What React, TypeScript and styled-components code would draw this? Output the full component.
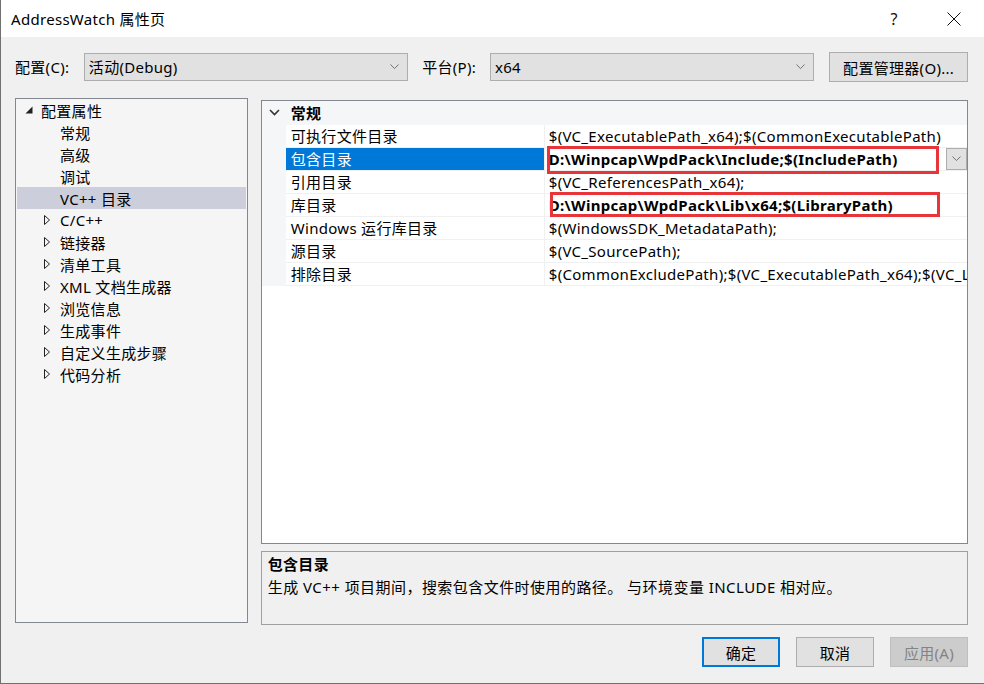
import React from "react";
import styled, { createGlobalStyle } from "styled-components";

const FONT = `"Noto Sans", "Noto Sans CJK SC", sans-serif`;

const GlobalStyle = createGlobalStyle`
  html, body { margin: 0; padding: 0; background: #f0f0f0; }
  body { font-family: ${FONT}; font-size: 15px; color: #000; letter-spacing: 0.3px; }
  * { box-sizing: border-box; }
`;

const Window = styled.div`
  width: 984px;
  height: 684px;
  display: flex;
  flex-direction: column;
  border-left: 1px solid #707070;
  border-bottom: 1px solid #707070;
  background: #f0f0f0;
  overflow: hidden;
`;

const TitleBar = styled.div`
  height: 37px;
  flex: none;
  background: #fff;
  display: flex;
  align-items: center;
  padding-left: 10px;
`;

const TitleText = styled.div`
  flex: 1;
  font-size: 15px;
  line-height: 20px;
`;

const CaptionButton = styled.div`
  width: 60px;
  height: 37px;
  display: flex;
  align-items: center;
  justify-content: center;
  font-size: 16px;
  color: #111;
`;

const Body = styled.div`
  flex: 1;
  display: flex;
  flex-direction: column;
  padding: 15px 16px 0 14px;
`;

const TopRow = styled.div`
  display: flex;
  align-items: center;
  height: 30px;
`;

const Label = styled.div<{ $w: number; $ml?: number }>`
  width: ${(p) => p.$w}px;
  margin-left: ${(p) => p.$ml ?? 0}px;
  line-height: 20px;
  white-space: nowrap;
`;

const Select = styled.div`
  width: 325px;
  height: 28px;
  background: #e1e1e1;
  border: 1px solid #adadad;
  display: flex;
  align-items: center;
  padding: 0 8px 0 4px;
`;

const SelectText = styled.div`
  flex: 1;
  line-height: 20px;
`;

const PushButton = styled.div<{ $w: number; $ml?: number; $default?: boolean; $disabled?: boolean }>`
  width: ${(p) => p.$w}px;
  height: 30px;
  margin-left: ${(p) => p.$ml ?? 0}px;
  display: flex;
  align-items: center;
  justify-content: center;
  background: ${(p) => (p.$disabled ? "#cccccc" : "#e1e1e1")};
  border: ${(p) => (p.$default ? "2px solid #0078d7" : p.$disabled ? "1px solid #bfbfbf" : "1px solid #adadad")};
  color: ${(p) => (p.$disabled ? "#838383" : "#000")};
  white-space: nowrap;
`;

const Main = styled.div`
  display: flex;
  margin-top: 16px;
  gap: 13px;
`;

const Tree = styled.div`
  width: 233px;
  height: 525px;
  border: 1px solid #828790;
  background: #f5f5f5;
  padding: 0 0 0 1px;
`;

const TreeRow = styled.div<{ $level: number; $selected?: boolean }>`
  height: 22px;
  display: flex;
  align-items: center;
  padding-left: ${(p) => p.$level * 19}px;
  background: ${(p) => (p.$selected ? "#cccedb" : "transparent")};
  margin-right: 1px;
  white-space: nowrap;
`;

const Expander = styled.div`
  width: 24px;
  height: 22px;
  flex: none;
  display: flex;
  align-items: center;
  padding-left: 8px;
`;

const RightColumn = styled.div`
  width: 708px;
  display: flex;
  flex-direction: column;
  padding-top: 2px;
`;

const Grid = styled.div`
  height: 444px;
  border: 1px solid #828790;
  background: #f5f6f8;
  display: flex;
  flex-direction: column;
`;

const CategoryRow = styled.div`
  height: 24px;
  display: flex;
  align-items: center;
  padding-bottom: 1px;
  font-weight: 700;
`;

const CatChevron = styled.div`
  width: 29px;
  padding-left: 7px;
  display: flex;
  align-items: center;
`;

const PropRow = styled.div`
  height: 23px;
  display: grid;
  grid-template-columns: 24px 259px 1fr;
  position: relative;
`;

const Gutter = styled.div`
  background: #f5f6f8;
`;

const NameCell = styled.div<{ $selected?: boolean }>`
  background: ${(p) => (p.$selected ? "#0078d7" : "#fff")};
  color: ${(p) => (p.$selected ? "#fff" : "#000")};
  border-bottom: 1px solid #f0f0f0;
  border-right: 1px solid #f0f0f0;
  padding-left: 5px;
  line-height: 22px;
  white-space: nowrap;
  overflow: hidden;
`;

const ValueCell = styled.div`
  background: #fff;
  border-bottom: 1px solid #f0f0f0;
  display: flex;
  position: relative;
  min-width: 0;
`;

const ValueText = styled.div<{ $bold?: boolean }>`
  flex: 1;
  min-width: 0;
  padding-left: 4px;
  line-height: 22px;
  font-weight: ${(p) => (p.$bold ? 700 : 400)};
  white-space: nowrap;
  overflow: hidden;
`;

const DropButton = styled.div`
  width: 21px;
  height: 22px;
  flex: none;
  background: #e1e1e1;
  border: 1px solid #adadad;
  display: flex;
  align-items: center;
  justify-content: center;
`;

const RedBox = styled.div<{ $l: number; $t: number; $w: number; $h: number }>`
  position: absolute;
  left: ${(p) => p.$l}px;
  top: ${(p) => p.$t}px;
  width: ${(p) => p.$w}px;
  height: ${(p) => p.$h}px;
  border: 3px solid #e8353a;
  pointer-events: none;
  z-index: 2;
`;

const Empty = styled.div`
  flex: 1;
  background: #fff;
`;

const Desc = styled.div`
  margin-top: 7px;
  height: 74px;
  border: 1px solid #a0a0a0;
  background: #f0f0f0;
  padding: 1px 6px;
  line-height: 23px;
`;

const DescTitle = styled.div`
  font-weight: 700;
`;

const DescText = styled.div`
  letter-spacing: 0.45px;
`;

const Footer = styled.div`
  display: flex;
  justify-content: flex-end;
  margin-top: 12px;
  gap: 16px;
`;

const Chevron = ({ color = "#555", w = 10 }: { color?: string; w?: number }) => (
  <svg width={w} height={w / 2 + 1} viewBox="0 0 10 6">
    <polyline points="0.5,0.5 5,5 9.5,0.5" fill="none" stroke={color} strokeWidth="1" />
  </svg>
);

const Expanded = () => (
  <svg width="8" height="8" viewBox="0 0 8 8">
    <polygon points="7.5,0.5 7.5,7.5 0.5,7.5" fill="#222" />
  </svg>
);

const Collapsed = () => (
  <svg width="7" height="10" viewBox="0 0 7 10">
    <polygon points="0.5,0.5 5.5,5 0.5,9.5" fill="none" stroke="#222" strokeWidth="1" />
  </svg>
);

type TItem = { label: string; level: number; exp?: "open" | "closed"; selected?: boolean };
const treeItems: TItem[] = [
  { label: "配置属性", level: 0, exp: "open" },
  { label: "常规", level: 1 },
  { label: "高级", level: 1 },
  { label: "调试", level: 1 },
  { label: "VC++ 目录", level: 1, selected: true },
  { label: "C/C++", level: 1, exp: "closed" },
  { label: "链接器", level: 1, exp: "closed" },
  { label: "清单工具", level: 1, exp: "closed" },
  { label: "XML 文档生成器", level: 1, exp: "closed" },
  { label: "浏览信息", level: 1, exp: "closed" },
  { label: "生成事件", level: 1, exp: "closed" },
  { label: "自定义生成步骤", level: 1, exp: "closed" },
  { label: "代码分析", level: 1, exp: "closed" },
];

type PItem = {
  name: string;
  value: string;
  selected?: boolean;
  bold?: boolean;
  box?: { l: number; t: number; w: number; h: number };
  drop?: boolean;
};
const props: PItem[] = [
  { name: "可执行文件目录", value: "$(VC_ExecutablePath_x64);$(CommonExecutablePath)" },
  {
    name: "包含目录",
    value: "D:\\Winpcap\\WpdPack\\Include;$(IncludePath)",
    selected: true,
    bold: true,
    drop: true,
    box: { l: 2, t: -2, w: 392, h: 28 },
  },
  { name: "引用目录", value: "$(VC_ReferencesPath_x64);" },
  {
    name: "库目录",
    value: "D:\\Winpcap\\WpdPack\\Lib\\x64;$(LibraryPath)",
    bold: true,
    box: { l: 5, t: -2, w: 390, h: 25 },
  },
  { name: "Windows 运行库目录", value: "$(WindowsSDK_MetadataPath);" },
  { name: "源目录", value: "$(VC_SourcePath);" },
  { name: "排除目录", value: "$(CommonExcludePath);$(VC_ExecutablePath_x64);$(VC_LibraryPath_x64);" },
];

export default function App() {
  return (
    <>
      <GlobalStyle />
      <Window>
        <TitleBar>
          <TitleText>AddressWatch 属性页</TitleText>
          <CaptionButton>?</CaptionButton>
          <CaptionButton>
            <svg width="14" height="14" viewBox="0 0 14 14">
              <line x1="0.5" y1="0.5" x2="13.5" y2="13.5" stroke="#111" strokeWidth="1" />
              <line x1="13.5" y1="0.5" x2="0.5" y2="13.5" stroke="#111" strokeWidth="1" />
            </svg>
          </CaptionButton>
        </TitleBar>
        <Body>
          <TopRow>
            <Label $w={69}>配置(C):</Label>
            <Select>
              <SelectText>活动(Debug)</SelectText>
              <Chevron color="#666" w={9} />
            </Select>
            <Label $w={68} $ml={14}>平台(P):</Label>
            <Select>
              <SelectText>x64</SelectText>
              <Chevron color="#666" w={9} />
            </Select>
            <PushButton $w={139} $ml={15}>配置管理器(O)...</PushButton>
          </TopRow>
          <Main>
            <Tree>
              {treeItems.map((t) => (
                <TreeRow key={t.label} $level={t.level} $selected={t.selected}>
                  <Expander>
                    {t.exp === "open" && <Expanded />}
                    {t.exp === "closed" && <Collapsed />}
                  </Expander>
                  {t.label}
                </TreeRow>
              ))}
            </Tree>
            <RightColumn>
              <Grid>
                <CategoryRow>
                  <CatChevron>
                    <svg width="11" height="7" viewBox="0 0 11 7">
                      <polyline points="1,1 5.5,5.5 10,1" fill="none" stroke="#333" strokeWidth="1.6" />
                    </svg>
                  </CatChevron>
                  常规
                </CategoryRow>
                {props.map((p) => (
                  <PropRow key={p.name}>
                    <Gutter />
                    <NameCell $selected={p.selected}>{p.name}</NameCell>
                    <ValueCell>
                      <ValueText $bold={p.bold}>{p.value}</ValueText>
                      {p.drop && (
                        <DropButton>
                          <Chevron color="#666" w={9} />
                        </DropButton>
                      )}
                      {p.box && <RedBox $l={p.box.l} $t={p.box.t} $w={p.box.w} $h={p.box.h} />}
                    </ValueCell>
                  </PropRow>
                ))}
                <Empty />
              </Grid>
              <Desc>
                <DescTitle>包含目录</DescTitle>
                <DescText>生成 VC++ 项目期间，搜索包含文件时使用的路径。 与环境变量 INCLUDE 相对应。</DescText>
              </Desc>
            </RightColumn>
          </Main>
          <Footer>
            <PushButton $w={78} $default>确定</PushButton>
            <PushButton $w={78}>取消</PushButton>
            <PushButton $w={78} $disabled>应用(A)</PushButton>
          </Footer>
        </Body>
      </Window>
    </>
  );
}
